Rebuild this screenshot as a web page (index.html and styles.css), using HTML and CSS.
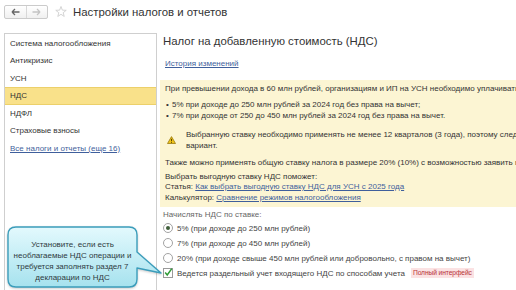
FILE: index.html
```html
<!DOCTYPE html>
<html lang="ru">
<head>
<meta charset="utf-8">
<title>Настройки налогов и отчетов</title>
<link rel="stylesheet" href="styles.css">
</head>
<body>
<header class="top">
  <div class="nav">
    <span class="navbtn"><svg width="9" height="8" viewBox="0 0 9 8"><path d="M1 4H8.5M1 4L4 1M1 4L4 7" fill="none" stroke="#666" stroke-width="1.3"/></svg></span>
    <span class="navbtn"><svg width="9" height="8" viewBox="0 0 9 8"><path d="M8 4H0.5M8 4L5 1M8 4L5 7" fill="none" stroke="#c4c4c4" stroke-width="1.3"/></svg></span>
  </div>
  <svg class="star" width="12" height="12" viewBox="0 0 12 12"><polygon points="6,0.5 7.35,4.14 11.23,4.3 8.19,6.71 9.23,10.45 6,8.3 2.77,10.45 3.81,6.71 0.77,4.3 4.65,4.14" fill="none" stroke="#cfcfcf" stroke-width="0.9" stroke-linejoin="round"/></svg>
  <h1 class="title">Настройки налогов и отчетов</h1>
</header>
<div class="main">
  <nav class="side">
    <div class="item">Система налогообложения</div>
    <div class="item">Антикризис</div>
    <div class="item">УСН</div>
    <div class="item active">НДС</div>
    <div class="item">НДФЛ</div>
    <div class="item">Страховые взносы</div>
    <div class="item"><a class="link">Все налоги и отчеты (еще 16)</a></div>
  </nav>
  <section class="content">
    <h2 class="heading">Налог на добавленную стоимость (НДС)</h2>
    <div class="history"><a class="link">История изменений</a></div>
    <div class="info">
      <p class="line">При превышении дохода в 60 млн рублей, организациям и ИП на УСН необходимо уплачивать НДС по одной из ставок:</p>
      <ul class="bullets">
        <li>5% при доходе до 250 млн рублей за 2024 год без права на вычет;</li>
        <li>7% при доходе от 250 до 450 млн рублей за 2024 год без права на вычет.</li>
      </ul>
      <div class="warn">
        <svg class="warn-icon" width="9" height="8" viewBox="0 0 9 8"><polygon points="4.5,0.6 8.5,7.5 0.5,7.5" fill="#f0c419" stroke="#9a7a10" stroke-width="0.8" stroke-linejoin="round"/><path d="M4.5 2.8V5.2" stroke="#5a4500" stroke-width="1"/><rect x="4" y="5.9" width="1" height="0.9" fill="#5a4500"/></svg>
        <p>Выбранную ставку необходимо применять не менее 12 кварталов (3 года), поэтому следует заранее выбрать наиболее выгодный<br>вариант.</p>
      </div>
      <p class="line also">Также можно применять общую ставку налога в размере 20% (10%) с возможностью заявить вычет входящего НДС.</p>
      <div class="help">
        <p>Выбрать выгодную ставку НДС поможет:</p>
        <p>Статья: <a class="link">Как выбрать выгодную ставку НДС для УСН с 2025 года</a></p>
        <p>Калькулятор: <a class="link">Сравнение режимов налогообложения</a></p>
      </div>
    </div>
    <div class="rates">
      <div class="caption">Начислять НДС по ставке:</div>
      <div class="opt"><span class="radio on"></span>5% (при доходе до 250 млн рублей)</div>
      <div class="opt"><span class="radio"></span>7% (при доходе до 450 млн рублей)</div>
      <div class="opt"><span class="radio"></span>20% (при доходе свыше 450 млн рублей или добровольно, с правом на вычет)</div>
      <div class="opt"><span class="check"><svg width="11" height="11" viewBox="0 0 11 11"><path d="M2.2 5.6L4.2 8L8.8 1.6" fill="none" stroke="#2f9a36" stroke-width="1.5"/></svg></span>Ведется раздельный учет входящего НДС по способам учета<span class="badge">Полный интерфейс</span></div>
    </div>
  </section>
</div>
<div class="callout">
  <svg class="callout-shape" width="160" height="64" viewBox="0 0 160 64">
    <defs>
      <linearGradient id="cg" x1="0" y1="0" x2="0" y2="1">
        <stop offset="0" stop-color="#e3f9fd"/>
        <stop offset="1" stop-color="#a6e2ee"/>
      </linearGradient>
    </defs>
    <path d="M9 1H122Q130 1 130 9V26L154 47L130 42V53Q130 61 122 61H9Q1 61 1 53V9Q1 1 9 1Z" fill="url(#cg)" stroke="#3b9dbb" stroke-width="1.4" stroke-linejoin="round"/>
  </svg>
  <div class="callout-text">Установите, если есть<br>необлагаемые НДС операции и<br>требуется заполнять раздел 7<br>декларации по НДС</div>
</div>
</body>
</html>
```
FILE: styles.css
```css
* { box-sizing: border-box; margin: 0; padding: 0; }
html, body { width: 516px; height: 290px; overflow: hidden; background: #fff; }
body {
  font-family: "Liberation Sans", Arial, sans-serif;
  font-size: 8px;
  color: #333;
  position: relative;
}
.link { color: #3f5f9c; text-decoration: underline; }

.top { height: 33px; display: flex; align-items: flex-start; padding: 5px 0 0 4px; }
.nav {
  display: flex; width: 44px; height: 14px;
  border: 1px solid #cbcbcb; border-radius: 2px;
  background: linear-gradient(#ffffff, #f0f0f0);
}
.navbtn { flex: 1; display: flex; align-items: center; justify-content: center; }
.navbtn + .navbtn { border-left: 1px solid #d8d8d8; }
.star { margin: 1px 0 0 7px; }
.title { font-size: 11.4px; font-weight: normal; line-height: 14px; margin-left: 6px; color: #333; }

.main { display: flex; height: 257px; overflow: hidden; }
.side {
  margin-left: 4px; width: 153px; height: 257px; flex: none;
  border: 1px solid #cfcfcf; border-bottom: none; padding-top: 0.5px;
}
.item { height: 17.5px; line-height: 17.5px; padding-left: 5px; white-space: nowrap; }
.item.active { background: #f9e18a; box-shadow: inset 0 1px 0 #ecd06a, inset 0 -1px 0 #ecd06a; }

.content { flex: 1; min-width: 0; padding-left: 3px; overflow: hidden; }
.heading { font-size: 11.4px; font-weight: normal; line-height: 16px; margin-left: 3px; color: #333; white-space: nowrap; }
.history { margin: 8.5px 0 0 5px; line-height: 11px; }

.info { margin-top: 11.5px; background: #fcf5d3; padding: 2.5px 0 4px 5px; white-space: nowrap; overflow: hidden; }
.line { line-height: 11px; }
.bullets { list-style: none; margin-top: 5px; line-height: 11px; }
.bullets li::before { content: "•"; display: inline-block; width: 6px; margin-left: 1px; }
.warn { display: flex; align-items: center; margin-top: 8px; line-height: 11px; }
.warn-icon { flex: none; margin: 0 10px 0 2px; }
.also { margin-top: 6px; }
.help { margin-top: 4px; line-height: 10.5px; }

.rates { white-space: nowrap; color: #444; }
.caption { margin-top: 1.5px; line-height: 11px; color: #666; padding-left: 3px; }
.opt { height: 15px; display: flex; align-items: center; padding-left: 3px; }
.caption + .opt { margin-top: 1px; }
.radio {
  width: 10px; height: 10px; border-radius: 50%; flex: none;
  border: 1px solid #a3a3a3; background: #fff; margin-right: 4px;
  display: flex; align-items: center; justify-content: center;
}
.radio.on::after { content: ""; width: 4px; height: 4px; border-radius: 50%; background: #3f5f3a; }
.check {
  width: 10px; height: 10px; flex: none; margin-right: 4px;
  border: 1px solid #9a9a9a; background: #fff; position: relative;
}
.check svg { position: absolute; left: -1px; top: -2px; }
.badge {
  margin-left: 6px; background: #fbe2e3; color: #b8323a;
  font-size: 6.7px; line-height: 10px; padding: 0 2px; letter-spacing: -0.1px;
}

.callout { position: absolute; left: 7px; top: 226px; width: 160px; height: 64px; }
.callout-shape { position: absolute; left: 0; top: 0; filter: drop-shadow(0 1px 1px rgba(0,0,0,0.2)); }
.callout-text {
  position: absolute; left: 1px; top: 12.5px; width: 129px;
  text-align: center; line-height: 11px; font-size: 8px; color: #2e3a3e;
}
```
